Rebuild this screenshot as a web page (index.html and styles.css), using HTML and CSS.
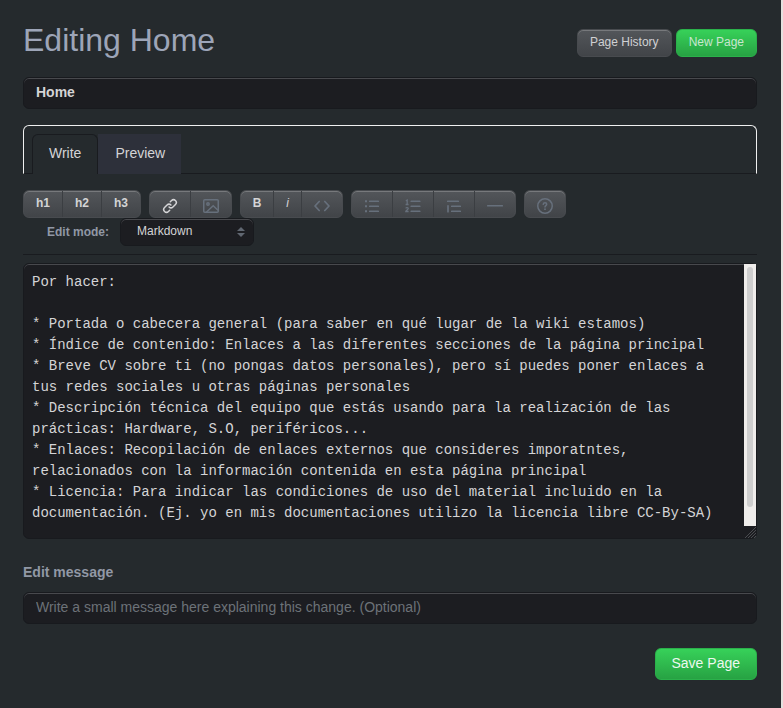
FILE: index.html
```html
<!DOCTYPE html>
<html lang="en">
<head>
<meta charset="utf-8">
<title>Editing Home</title>
<link rel="stylesheet" href="styles.css">
</head>
<body>
<main class="page">
  <header class="page-header">
    <h1>Editing Home</h1>
    <div class="actions">
      <a class="btn btn-small" href="#history">Page History</a>
      <a class="btn btn-small btn-primary" href="#new">New Page</a>
    </div>
  </header>

  <form class="editor">
    <input class="field field-title" type="text" value="Home" aria-label="Title">

    <nav class="tabs">
      <button class="tab tab-active" type="button">Write</button>
      <button class="tab" type="button">Preview</button>
    </nav>

    <div class="toolbar">
      <div class="group">
        <button class="tool tool-heading" type="button">h1</button>
        <button class="tool tool-heading" type="button">h2</button>
        <button class="tool tool-heading" type="button">h3</button>
      </div>
      <div class="group">
        <button class="tool tool-icon tool-bright" type="button" aria-label="Link">
          <svg width="16" height="16" viewBox="0 0 16 16" fill="currentColor"><path d="M7.775 3.275a.75.75 0 0 0 1.06 1.06l1.25-1.25a2 2 0 1 1 2.83 2.83l-2.5 2.5a2 2 0 0 1-2.83 0 .75.75 0 0 0-1.06 1.06 3.5 3.5 0 0 0 4.95 0l2.5-2.5a3.5 3.5 0 0 0-4.95-4.95l-1.25 1.25zm-4.69 9.64a2 2 0 0 1 0-2.83l2.5-2.5a2 2 0 0 1 2.83 0 .75.75 0 0 0 1.06-1.06 3.5 3.5 0 0 0-4.95 0l-2.5 2.5a3.5 3.5 0 0 0 4.95 4.95l1.25-1.25a.75.75 0 0 0-1.06-1.06l-1.25 1.25a2 2 0 0 1-2.83 0z"/></svg>
        </button>
        <button class="tool tool-icon" type="button" aria-label="Image">
          <svg width="16" height="16" viewBox="0 0 16 16" fill="none" stroke="currentColor" stroke-width="1.5"><rect x=".75" y="1.75" width="14.5" height="12.5" rx="1"/><circle cx="5" cy="6" r="1.2"/><path d="M3.5 14 10.2 7.7 15 12.2"/></svg>
        </button>
      </div>
      <div class="group">
        <button class="tool tool-bold" type="button">B</button>
        <button class="tool tool-italic" type="button">i</button>
        <button class="tool tool-icon" type="button" aria-label="Code">
          <svg width="16" height="16" viewBox="0 0 16 16" fill="none" stroke="currentColor" stroke-width="1.7" stroke-linecap="round" stroke-linejoin="round"><path d="M5.200 3.500 1 8l4.200 4.500M10.800 3.500 15 8l-4.200 4.500"/></svg>
        </button>
      </div>
      <div class="group">
        <button class="tool tool-icon" type="button" aria-label="Unordered list">
          <svg width="16" height="16" viewBox="0 0 16 16" fill="none" stroke="currentColor" stroke-width="1.7"><path stroke-linecap="round" d="M5.750 3.250h8.500M5.750 8.250h8.500M5.750 13.250h8.500"/><path stroke-width="2" d="M1 3.250h2M1 8.250h2M1 13.250h2"/></svg>
        </button>
        <button class="tool tool-icon" type="button" aria-label="Ordered list">
          <svg width="16" height="16" viewBox="0 0 16 16" fill="none" stroke="currentColor" stroke-width="1.7"><path stroke-linecap="round" d="M6.250 3.250h8.500M6.250 8.250h8.500M6.250 13.250h8.500"/><path stroke-width="1.300" d="M.8 2.800 2.200 2v4.500M.6 6.500h3M.8 10.400c.4-1.200 2.600-1 2.400.3C3.100 11.700.8 12.400.8 13.500h2.800"/></svg>
        </button>
        <button class="tool tool-icon" type="button" aria-label="Blockquote">
          <svg width="16" height="16" viewBox="0 0 16 16" fill="none" stroke="currentColor" stroke-width="1.7" stroke-linecap="round"><path d="M1.750 3.250h10.500M5.750 8.250h8.500M5.750 13.250h8.500M2 7.750v6"/></svg>
        </button>
        <button class="tool tool-icon" type="button" aria-label="Horizontal rule">
          <svg width="16" height="16" viewBox="0 0 16 16" fill="none" stroke="currentColor" stroke-width="1.7" stroke-linecap="round"><path d="M.750 7.750h14.500"/></svg>
        </button>
      </div>
      <div class="group">
        <button class="tool tool-icon" type="button" aria-label="Help">
          <svg width="16" height="16" viewBox="0 0 16 16" fill="none" stroke="currentColor" stroke-width="1.5"><circle cx="8" cy="8" r="7.250"/><path stroke-linecap="round" d="M6.200 6.300C6.500 4.300 9.700 4.400 9.700 6.300 9.700 7.600 8 7.500 8 9"/><circle cx="8" cy="11.200" r=".9" fill="currentColor" stroke="none"/></svg>
        </button>
      </div>
    </div>

    <div class="mode">
      <label for="mode">Edit mode:</label>
      <div class="select-wrap">
        <select id="mode"><option>Markdown</option></select>
        <svg class="arrows" width="8" height="10" viewBox="0 0 8 10" fill="currentColor"><path d="M4 0 8 4H0zM0 6h8l-4 4z"/></svg>
      </div>
    </div>

    <div class="content">
      <textarea class="field body-text" aria-label="Page content" spellcheck="false">Por hacer:

* Portada o cabecera general (para saber en qué lugar de la wiki estamos)
* Índice de contenido: Enlaces a las diferentes secciones de la página principal
* Breve CV sobre ti (no pongas datos personales), pero sí puedes poner enlaces a tus redes sociales u otras páginas personales
* Descripción técnica del equipo que estás usando para la realización de las prácticas: Hardware, S.O, periféricos...
* Enlaces: Recopilación de enlaces externos que consideres imporatntes, relacionados con la información contenida en esta página principal
* Licencia: Para indicar las condiciones de uso del material incluido en la documentación. (Ej. yo en mis documentaciones utilizo la licencia libre CC-By-SA)</textarea>
      <div class="scrollbar"><div class="thumb"></div></div>
      <svg class="grip" width="11" height="11" viewBox="0 0 11 11" fill="none" stroke="#4a4c50"><path d="M0 11 11 0M3 11l8-8M6 11l5-5M9 11l2-2"/></svg>
    </div>

    <label class="message-label" for="message">Edit message</label>
    <input class="field" id="message" type="text" placeholder="Write a small message here explaining this change. (Optional)">

    <div class="submit">
      <button class="btn btn-primary btn-save" type="submit">Save Page</button>
    </div>
  </form>
</main>
</body>
</html>
```
FILE: styles.css
```css
* {
  box-sizing: border-box;
}

body {
  margin: 0;
  min-height: 100vh;
  border-right: 2px solid #e4e1de;
  background: #252a2d;
  color: #d4d4d6;
  font: 14px/20px "Liberation Sans", Arial, sans-serif;
}

button,
input,
select,
textarea {
  margin: 0;
  color: inherit;
  font: inherit;
}

.page {
  padding: 20px 24px 28px 23px;
}

.page-header {
  display: flex;
  justify-content: space-between;
  margin-bottom: 17px;
}

h1 {
  margin: 0;
  color: #9da5b8;
  font-size: 32px;
  font-weight: 400;
  line-height: 40px;
}

.actions {
  display: flex;
  gap: 4px;
  padding-top: 9px;
}

.btn {
  border: 1px solid #484b4f;
  border-radius: 6px;
  background: linear-gradient(#53565a, #414448);
  box-shadow: inset 0 1px #77797c;
  color: #d0d1d3;
  text-decoration: none;
}

.btn-small {
  height: 28px;
  padding: 2px 12px 4px;
  font-size: 12px;
}

.btn-primary {
  border-color: #2bb14b;
  background: linear-gradient(#37d159, #27a243);
  box-shadow: none;
  color: #c9e6cf;
}

.field {
  display: block;
  width: 100%;
  height: 32px;
  padding: 4px 12px 6px;
  border: 1px solid #181a1e;
  border-radius: 6px;
  outline: 0;
  background: #1c1d21;
  box-shadow: inset 0 1px #48494d;
}

.field::placeholder {
  color: #6c7278;
  opacity: 1;
}

.field-title {
  font-weight: 700;
}

.tabs {
  display: flex;
  margin: 16px 0;
  padding: 8px 8px 0;
  border: 1px solid #f0f0f0;
  border-bottom-color: #191b1f;
  border-radius: 6px 6px 0 0;
}

.tab {
  height: 40px;
  margin-bottom: -1px;
  padding: 0 16px 3px 17px;
  border: 0;
  background: #2d303a;
}

.tab-active {
  padding: 0 16px 4px;
  border: 1px solid #191b1f;
  border-bottom: 0;
  border-radius: 6px 6px 0 0;
  background: #252a2d;
}

.toolbar {
  display: flex;
  flex-wrap: wrap;
  gap: 8px;
}

.group {
  display: flex;
  overflow: hidden;
  border: 1px solid #484b4f;
  border-radius: 6px;
  background: linear-gradient(#53565a, #414448);
  box-shadow: inset 0 1px #77797c;
}

.tool {
  box-sizing: content-box;
  height: 23px;
  padding: 0 0 3px;
  border: 0;
  background: none;
  font-size: 12px;
  font-weight: 700;
}

.tool:not(:last-child) {
  border-right: 1px solid #3b3e42;
}

.tool-heading {
  width: 38px;
}

.tool-bold {
  width: 32px;
}

.tool-italic {
  width: 27px;
  font-style: italic;
  font-weight: 400;
}

.tool-icon {
  width: 40px;
  padding: 3px 0 0;
  color: #67707c;
}

.tool-bright {
  color: #d4d4d6;
}

.tool svg {
  display: block;
  margin: 0 auto;
}

.mode {
  display: flex;
  align-items: center;
  gap: 11px;
  padding: 0 0 8px 24px;
  border-bottom: 1px solid #191b1f;
  font-size: 12px;
}

.mode label {
  color: #9198a5;
  font-weight: 700;
}

.select-wrap {
  position: relative;
  color: #d4d4d6;
}

.select-wrap select {
  display: block;
  width: 134px;
  height: 28px;
  padding: 0 24px 2px 16px;
  border: 1px solid #181a1e;
  border-radius: 6px;
  appearance: none;
  background: #1c1d21;
  box-shadow: inset 0 1px #48494d;
}

.arrows {
  position: absolute;
  top: 9px;
  right: 9px;
  color: #606771;
  pointer-events: none;
}

.content {
  position: relative;
  margin: 8px 0 23px;
}

.body-text {
  height: 276px;
  padding: 8px 40px 8px 8px;
  overflow: hidden;
  resize: none;
  font: 14px/21px "Liberation Mono", monospace;
}

.scrollbar {
  position: absolute;
  top: 1px;
  right: 1px;
  bottom: 13px;
  width: 12px;
  padding: 3px;
  background: #efedeb;
}

.thumb {
  width: 6px;
  height: 240px;
  border-radius: 3px;
  background: #cecece;
}

.grip {
  position: absolute;
  right: 1px;
  bottom: 1px;
}

.message-label {
  display: block;
  margin-bottom: 10px;
  color: #9198a5;
  font-weight: 700;
}

.submit {
  display: flex;
  justify-content: flex-end;
  margin-top: 24px;
}

.btn-save {
  height: 32px;
  padding: 0 16px 2px;
  color: #edf8ef;
}
```
